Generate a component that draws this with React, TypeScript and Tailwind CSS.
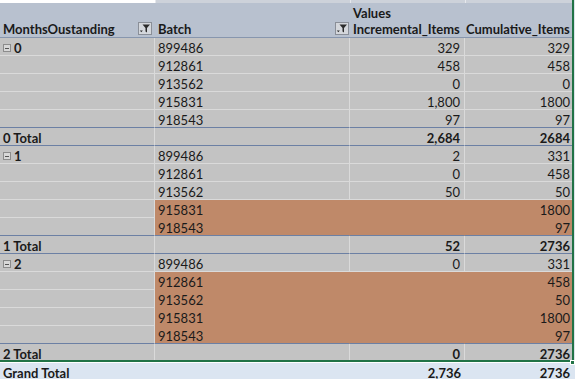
import React from "react";

type R = {
  a?: string;
  icon?: boolean;
  b?: string;
  c?: string;
  d?: string;
  total?: boolean;
  orange?: boolean;
  blueBottom?: boolean;
};

const rows: R[] = [
  { a: "0", icon: true, b: "899486", c: "329", d: "329" },
  { b: "912861", c: "458", d: "458" },
  { b: "913562", c: "0", d: "0" },
  { b: "915831", c: "1,800", d: "1800" },
  { b: "918543", c: "97", d: "97", blueBottom: true },
  { a: "0 Total", c: "2,684", d: "2684", total: true, blueBottom: true },
  { a: "1", icon: true, b: "899486", c: "2", d: "331" },
  { b: "912861", c: "0", d: "458" },
  { b: "913562", c: "50", d: "50" },
  { b: "915831", d: "1800", orange: true },
  { b: "918543", d: "97", orange: true, blueBottom: true },
  { a: "1 Total", c: "52", d: "2736", total: true, blueBottom: true },
  { a: "2", icon: true, b: "899486", c: "0", d: "331" },
  { b: "912861", d: "458", orange: true },
  { b: "913562", d: "50", orange: true },
  { b: "915831", d: "1800", orange: true },
  { b: "918543", d: "97", orange: true, blueBottom: true },
  { a: "2 Total", c: "0", d: "2736", total: true },
];

function FilterBtn() {
  return (
    <div className="w-[14px] h-[13px] border border-[#8a8f98] bg-[#d4d7dc] flex items-center justify-center">
      <svg width="12" height="11" viewBox="0 0 12 11">
        <path d="M3.5 1.5 H11 L8 5 V9.5 L6.5 8.5 V5 Z" fill="#2b2b2b" />
        <path d="M0.8 7.5 H3.8 L2.3 9.2 Z" fill="#2b2b2b" />
      </svg>
    </div>
  );
}

function Collapse() {
  return (
    <span className="inline-flex w-[8px] h-[8px] border border-[#8c8c8c] bg-[#d8d8d8] items-center justify-center mr-[3px]">
      <span className="block w-[4px] h-[1px] bg-[#555]" />
    </span>
  );
}

function Row({ r, last }: { r: R; last: boolean }) {
  const light = "border-[#dadada]";
  const bottomColor = last
    ? "border-b-0"
    : r.blueBottom
    ? "border-b border-b-[#6c80a4]"
    : "border-b border-b-[#dadada]";
  const orangeBottom = last
    ? "border-b-0"
    : r.blueBottom
    ? "border-b border-b-[#6c80a4]"
    : "border-b border-b-[#bf8969]";
  const wt = r.total ? "font-bold" : "";
  const bodyBottom = r.orange ? orangeBottom : bottomColor;
  const bg = r.orange ? "bg-[#bf8969]" : "bg-[#c3c3c3]";
  return (
    <div className="grid grid-cols-[155px_195px_115px_107px] h-[18px]">
      <div
        className={`bg-[#c3c3c3] border-r ${light} ${bottomColor} pl-[3px] pt-[3px] flex items-center font-bold`}
      >
        {r.icon && <Collapse />}
        {r.a}
      </div>
      <div
        className={`${bg} ${r.orange ? "border-r border-r-[#bf8969]" : `border-r ${light}`} ${bodyBottom} pl-[3px] pt-[3px] flex items-center ${wt}`}
      >
        {r.b}
      </div>
      <div
        className={`${bg} ${r.orange ? "border-r border-r-[#bf8969]" : `border-r ${light}`} ${bodyBottom} pr-[4px] pt-[3px] flex items-center justify-end ${wt}`}
      >
        {r.c}
      </div>
      <div
        className={`${bg} ${bodyBottom} pr-[2px] pt-[3px] flex items-center justify-end ${wt}`}
      >
        {r.d}
      </div>
    </div>
  );
}

export default function App() {
  return (
    <div
      className="w-[575px] h-[379px] overflow-hidden bg-white text-[13px] text-[#1a1a1a] leading-none"
      style={{ fontFamily: "Lato, 'Open Sans', sans-serif" }}
    >
      <div className="relative w-[575px] flex">
        <div className="w-[572px] flex flex-col">
          {/* top strip */}
          <div className="grid grid-cols-[155px_195px_115px_107px] h-[3px]">
            <div className="bg-white" />
            <div className="bg-[#cdd2da] border-l border-[#e6e8ec]" />
            <div className="bg-[#cdd2da] border-l border-[#e6e8ec]" />
            <div className="bg-[#cdd2da] border-l border-[#e6e8ec]" />
          </div>
          {/* header row 1 */}
          <div className="grid grid-cols-[155px_195px_115px_107px] h-[17px] bg-[#b8c1cf]">
            <div />
            <div />
            <div className="pl-[3px] flex items-end font-bold">Values</div>
            <div />
          </div>
          {/* header row 2 */}
          <div className="grid grid-cols-[155px_195px_115px_107px] h-[18px] bg-[#b8c1cf] border-b border-[#8796ae] font-bold">
            <div className="pl-[3px] flex items-center justify-between pr-[3px]">
              <span className="pt-[2px]">MonthsOustanding</span>
              <FilterBtn />
            </div>
            <div className="pl-[3px] flex items-center justify-between pr-[1px]">
              <span className="pt-[2px]">Batch</span>
              <FilterBtn />
            </div>
            <div className="pl-[3px] pt-[2px] flex items-center">Incremental_Items</div>
            <div className="pl-[1px] pt-[2px] flex items-center">Cumulative_Items</div>
          </div>
          {rows.map((r, i) => (
            <Row key={i} r={r} last={i === rows.length - 1} />
          ))}
        </div>
        <div className="w-[2px] bg-[#217346]" />
        <div className="w-[1px] bg-[#dde3ea]" />
        <div className="absolute left-0 right-[1px] bottom-0 h-[2px] bg-[#217346]" />
        <div className="absolute right-0 bottom-[-3px] w-[5px] h-[5px] bg-[#217346] border border-white" />
      </div>
      <div className="h-[1px] bg-white" />
      <div className="grid grid-cols-[155px_195px_115px_110px] h-[18px] bg-[#dbe5f1] font-bold">
        <div className="pl-[3px] pt-[2px] flex items-center">Grand Total</div>
        <div />
        <div className="pr-[4px] pt-[2px] flex items-center justify-end">2,736</div>
        <div className="pr-[5px] pt-[2px] flex items-center justify-end">2736</div>
      </div>
    </div>
  );
}
